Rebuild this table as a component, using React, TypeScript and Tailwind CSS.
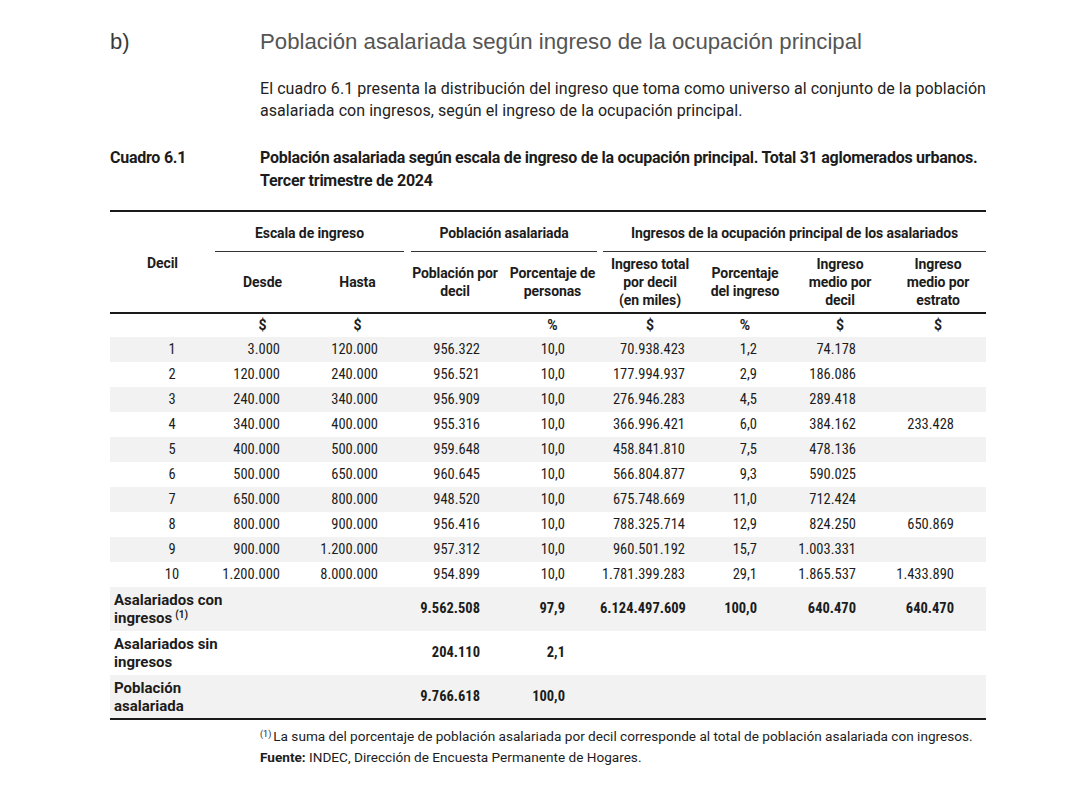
import React from 'react';

// Table 6.1 data: decil, desde, hasta, poblacion, pct personas, ingreso total, pct ingreso, medio decil, medio estrato
const rows: string[][] = [
  ['1', '3.000', '120.000', '956.322', '10,0', '70.938.423', '1,2', '74.178', ''],
  ['2', '120.000', '240.000', '956.521', '10,0', '177.994.937', '2,9', '186.086', ''],
  ['3', '240.000', '340.000', '956.909', '10,0', '276.946.283', '4,5', '289.418', ''],
  ['4', '340.000', '400.000', '955.316', '10,0', '366.996.421', '6,0', '384.162', '233.428'],
  ['5', '400.000', '500.000', '959.648', '10,0', '458.841.810', '7,5', '478.136', ''],
  ['6', '500.000', '650.000', '960.645', '10,0', '566.804.877', '9,3', '590.025', ''],
  ['7', '650.000', '800.000', '948.520', '10,0', '675.748.669', '11,0', '712.424', ''],
  ['8', '800.000', '900.000', '956.416', '10,0', '788.325.714', '12,9', '824.250', '650.869'],
  ['9', '900.000', '1.200.000', '957.312', '10,0', '960.501.192', '15,7', '1.003.331', ''],
  ['10', '1.200.000', '8.000.000', '954.899', '10,0', '1.781.399.283', '29,1', '1.865.537', '1.433.890'],
];

// right padding per column so the numbers line up like the source
const cellPad = [
  'text-center pl-[19px]',
  'text-right pr-[30px]',
  'text-right pr-[27px]',
  'text-right pr-[25px]',
  'text-right pr-[35px]',
  'text-right pr-[15px]',
  'text-right pr-[33px]',
  'text-right pr-[34px]',
  'text-right pr-[32px]',
];

const narrow = "font-['Roboto',sans-serif] font-stretch-75%";

const summary = [
  { label: 'Asalariados con', label2: 'ingresos', sup: true, vals: ['9.562.508', '97,9', '6.124.497.609', '100,0', '640.470', '640.470'] },
  { label: 'Asalariados sin', label2: 'ingresos', sup: false, vals: ['204.110', '2,1', '', '', '', ''] },
  { label: 'Población', label2: 'asalariada', sup: false, vals: ['9.766.618', '100,0', '', '', '', ''] },
];

const HeadCell = ({ children }: { children: React.ReactNode }) => (
  <th className="text-center align-middle font-bold leading-[18px] px-0 text-[14px] font-stretch-90% tracking-[-0.1px]">{children}</th>
);

export default function App() {
  return (
    <div className="w-[1080px] h-[789px] bg-white text-[#1c1c1c] pl-[110px] pt-[28px]">
      {/* section heading */}
      <div className="flex font-['Liberation_Sans',Arial,sans-serif]">
        <div className="w-[150px] text-[22px] leading-[28px] text-[#3a3a3a]">b)</div>
        <h2 className="text-[22.2px] leading-[28px] text-[#555555]">
          Población asalariada según ingreso de la ocupación principal
        </h2>
      </div>

      <p className="ml-[150px] mt-[22px] w-[740px] whitespace-nowrap text-[16px] leading-[22px] text-[#222] font-['Roboto',sans-serif] tracking-[0.06px]">
        El cuadro 6.1 presenta la distribución del ingreso que toma como universo al conjunto de la población
        <br />
        asalariada con ingresos, según el ingreso de la ocupación principal.
      </p>

      {/* caption */}
      <div className="flex mt-[24px] font-bold text-[16px] leading-[23px] font-['Roboto',sans-serif] font-stretch-87.5% tracking-[-0.25px]">
        <div className="w-[150px]">Cuadro 6.1</div>
        <div className="whitespace-nowrap">
          Población asalariada según escala de ingreso de la ocupación principal. Total 31 aglomerados urbanos.
          <br />
          Tercer trimestre de 2024
        </div>
      </div>

      <table className={`mt-[18px] w-[876px] table-fixed border-collapse text-[14.5px] ${narrow}`}>
        <colgroup>
          <col className="w-[105px]" />
          <col className="w-[95px]" />
          <col className="w-[95px]" />
          <col className="w-[100px]" />
          <col className="w-[95px]" />
          <col className="w-[100px]" />
          <col className="w-[90px]" />
          <col className="w-[100px]" />
          <col className="w-[96px]" />
        </colgroup>
        <thead>
          <tr className="border-t-2 border-[#1a1a1a] h-[41px] text-[14px] font-stretch-90% tracking-[-0.1px]">
            <th rowSpan={2} className="text-center align-middle font-bold pt-[2px]">Decil</th>
            <th colSpan={2} className="p-0 font-bold align-bottom">
              <div className="mr-[1px] border-b border-[#333] pb-[7px]">Escala de ingreso</div>
            </th>
            <th colSpan={2} className="p-0 font-bold align-bottom">
              <div className="ml-[6px] mr-[3px] border-b border-[#333] pb-[7px]">Población asalariada</div>
            </th>
            <th colSpan={4} className="p-0 font-bold align-bottom">
              <div className="ml-[3px] border-b border-[#333] pb-[7px]">Ingresos de la ocupación principal de los asalariados</div>
            </th>
          </tr>
          <tr className="h-[61px] border-b-2 border-[#1a1a1a]">
            <HeadCell>Desde</HeadCell>
            <HeadCell>Hasta</HeadCell>
            <HeadCell>Población por<br />decil</HeadCell>
            <HeadCell>Porcentaje de<br />personas</HeadCell>
            <HeadCell>Ingreso total<br />por decil<br />(en miles)</HeadCell>
            <HeadCell>Porcentaje<br />del ingreso</HeadCell>
            <HeadCell>Ingreso<br />medio por<br />decil</HeadCell>
            <HeadCell>Ingreso<br />medio por<br />estrato</HeadCell>
          </tr>
        </thead>
        <tbody>
          <tr className="h-[24px] font-bold text-center text-[14px] font-stretch-90%">
            <td></td>
            <td>$</td>
            <td>$</td>
            <td></td>
            <td>%</td>
            <td>$</td>
            <td>%</td>
            <td>$</td>
            <td>$</td>
          </tr>
          {rows.map((r, i) => (
            <tr key={r[0]} className={`h-[25px] ${i % 2 === 0 ? 'bg-[#f2f2f2]' : 'bg-white'}`}>
              {r.map((v, j) => (
                <td key={j} className={`${cellPad[j]} align-middle p-0`}>
                  {v}
                </td>
              ))}
            </tr>
          ))}
          {summary.map((s, i) => (
            <tr
              key={s.label}
              className={`h-[44px] font-bold ${i % 2 === 0 ? 'bg-[#f2f2f2]' : 'bg-white'} ${i === 2 ? 'border-b-2 border-[#1a1a1a]' : ''}`}
            >
              <td colSpan={3} className="pl-[4px] leading-[18px] align-middle text-[15px] font-stretch-90%">
                {s.label}
                <br />
                {s.label2}
                {s.sup && <sup className="text-[10px] font-bold ml-[3px]">(1)</sup>}
              </td>
              {s.vals.map((v, j) => (
                <td key={j} className={`${cellPad[j + 3]} align-middle`}>
                  {v}
                </td>
              ))}
            </tr>
          ))}
        </tbody>
      </table>

      <div className="ml-[150px] mt-[6px] text-[13.6px] leading-[21px] font-['Roboto',sans-serif] text-[#1c1c1c]">
        <div>
          <sup className="text-[9px] mr-[2px]">(1)</sup>La suma del porcentaje de población asalariada por decil corresponde al total de población asalariada con ingresos.
        </div>
        <div>
          <span className="font-bold">Fuente:</span> INDEC, Dirección de Encuesta Permanente de Hogares.
        </div>
      </div>
    </div>
  );
}
